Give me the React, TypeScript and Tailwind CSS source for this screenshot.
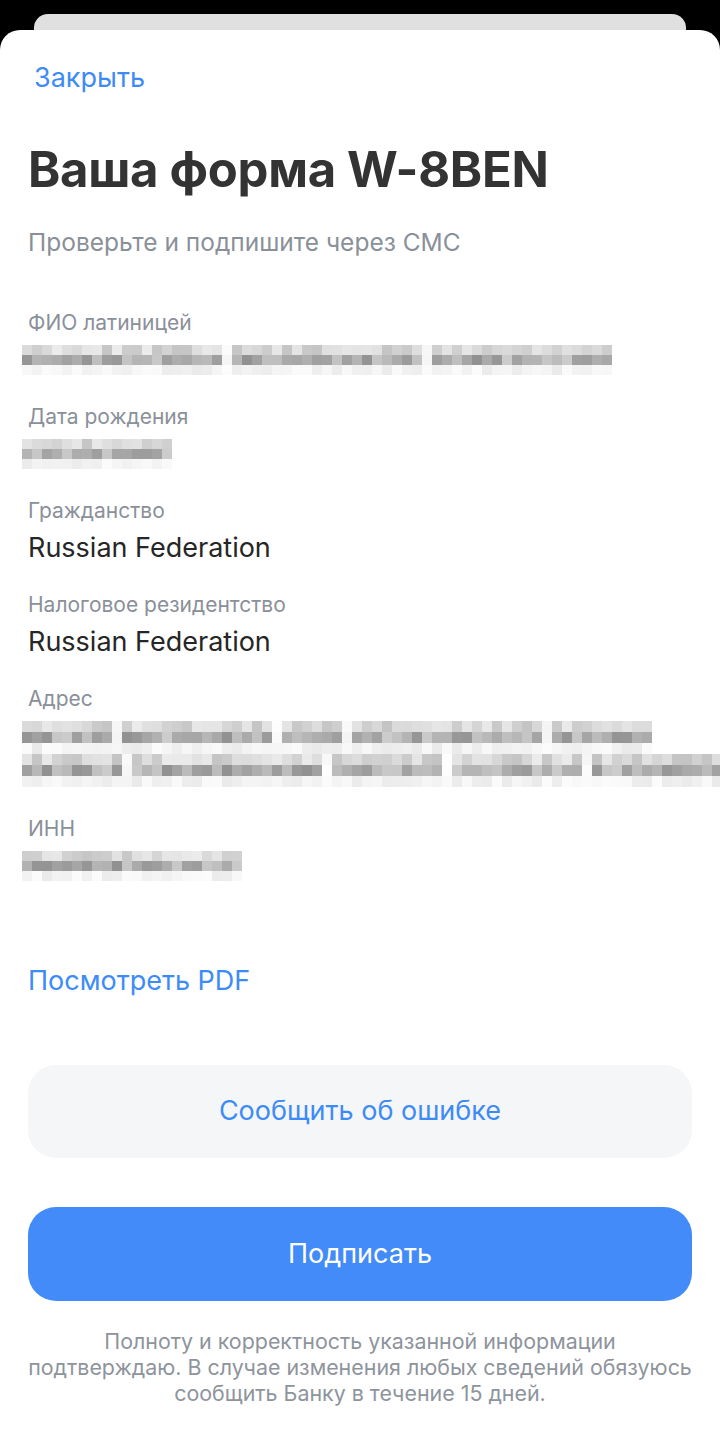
import React from "react";

const FONT = { fontFamily: "Inter, 'Noto Sans', sans-serif" };

// deterministic noise for the pixelated (censored) values
function makeRand(seed: number) {
  let s = seed;
  return () => {
    s = (s * 1103515245 + 12345) % 2147483648;
    return s / 2147483648;
  };
}

const ROW_RANGES: [number, number][] = [
  [196, 236],
  [145, 205],
  [234, 252],
];

function Mosaic({ groups, seed, rows = ["h-[10px]", "h-[10px]", "h-[10px]"] }: { groups: number[]; seed: number; rows?: string[] }) {
  const rand = makeRand(seed);
  const cols: (number | null)[] = [];
  groups.forEach((n, i) => {
    if (i > 0) cols.push(null);
    for (let k = 0; k < n; k++) cols.push(k);
  });
  return (
    <div className="-ml-[6px] flex flex-col">
      {ROW_RANGES.map(([lo, hi], r) => (
        <div key={r} className={`flex ${rows[r]}`}>
          {cols.map((c, i) => {
            const v =
              c === null
                ? 244 + Math.floor(rand() * 10)
                : Math.floor(lo + rand() * (hi - lo));
            return (
              <div
                key={i}
                className="h-full w-[10px] shrink-0"
                style={{ backgroundColor: `rgb(${v},${v},${v})` }}
              />
            );
          })}
        </div>
      ))}
    </div>
  );
}

function Field({ label, children }: { label: string; children: React.ReactNode }) {
  return (
    <div className="flex flex-col">
      <p className="text-[21px] leading-[24px] text-[#8a9099]">{label}</p>
      <div className="mt-[10px]">{children}</div>
    </div>
  );
}

const ADDR_ROWS = ["h-[11px]", "h-[11px]", "h-[11px]"];

export default function App() {
  return (
    <div className="min-h-[1438px] overflow-hidden bg-black pt-[14px]" style={FONT}>
      {/* stacked sheet behind */}
      <div className="mx-[34px] h-[16px] rounded-t-[14px] bg-[#e0e0e0]" />

      <div className="flex min-h-[1408px] flex-col overflow-hidden rounded-t-[20px] bg-white px-[28px] pt-[33px] pb-[30px]">
        <button className="ml-[6px] self-start text-[27px] leading-[30px] text-[#3d8bf7]">
          Закрыть
        </button>

        <h1 className="mt-[49px] text-[49px] font-bold leading-[56px] tracking-[-0.3px] text-[#333333]">
          Ваша форма W-8BEN
        </h1>
        <p className="mt-[30px] text-[24.5px] leading-[28px] text-[#8a9099]">
          Проверьте и подпишите через СМС
        </p>

        <div className="mt-[55px] flex flex-col gap-[30px]">
          <Field label="ФИО латиницей">
            <Mosaic groups={[20, 19, 18]} seed={7} />
          </Field>
          <Field label="Дата рождения">
            <Mosaic groups={[15]} seed={21} />
          </Field>
          <Field label="Гражданство">
            <p className="text-[27px] leading-[30px] text-[#262626]">Russian Federation</p>
          </Field>
          <Field label="Налоговое резидентство">
            <p className="text-[27px] leading-[30px] text-[#262626]">Russian Federation</p>
          </Field>
          <Field label="Адрес">
            <div className="flex flex-col">
              <Mosaic groups={[9, 15, 6, 19, 10]} seed={42} rows={ADDR_ROWS} />
              <Mosaic groups={[10, 19, 11, 13, 15]} seed={93} rows={ADDR_ROWS} />
            </div>
          </Field>
          <Field label="ИНН">
            <Mosaic groups={[22]} seed={55} />
          </Field>
        </div>

        <a className="mt-[85px] text-[27px] leading-[30px] text-[#3d8bf7]">Посмотреть PDF</a>

        <button className="mt-[69px] h-[93px] rounded-[28px] bg-[#f5f6f8] text-[27px] text-[#3d8bf7]">
          Сообщить об ошибке
        </button>
        <button className="mt-[49px] h-[94px] rounded-[28px] bg-[#438bf8] text-[27px] text-white">
          Подписать
        </button>

        <p className="mt-[27px] text-center text-[21.4px] leading-[26px] text-[#8e949c]">
          Полноту и корректность указанной информации
          <br />
          подтверждаю. В случае изменения любых сведений обязуюсь
          <br />
          сообщить Банку в течение 15 дней.
        </p>
      </div>
    </div>
  );
}
